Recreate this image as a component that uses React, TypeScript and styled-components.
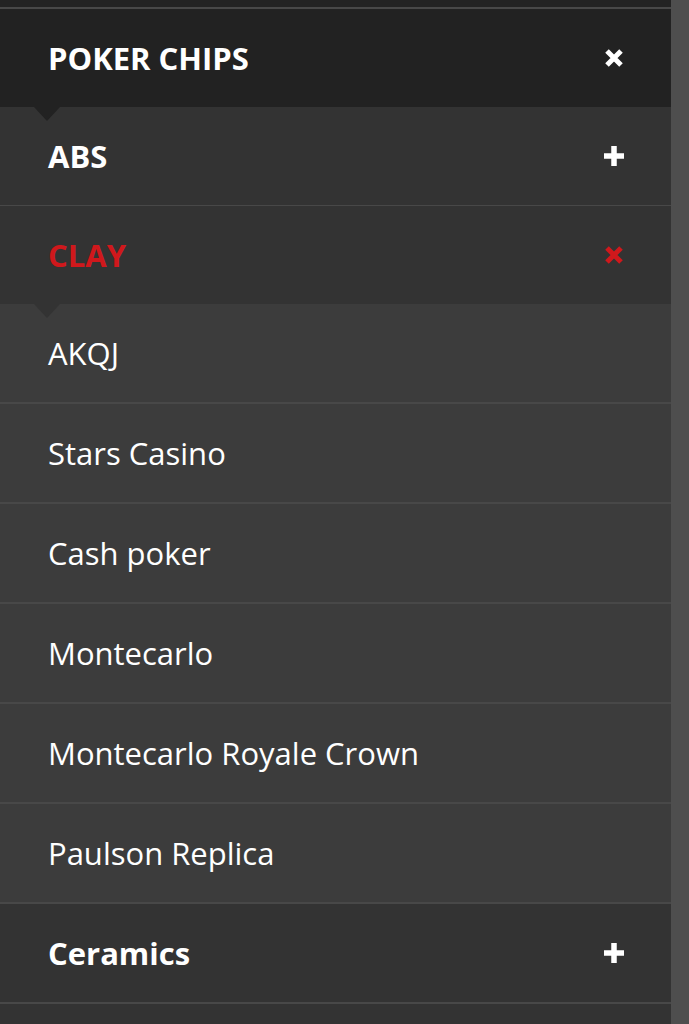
import React from "react";
import styled, { createGlobalStyle } from "styled-components";

const GlobalStyle = createGlobalStyle`
    html, body {
        margin: 0;
        padding: 0;
        background: #4b4b4b;
    }
    body {
        font-family: "Open Sans", "Noto Sans", sans-serif;
    }
`;

type Tone = "dark" | "mid" | "light";

const tones: Record<Tone, string> = {
    dark: "#222222",
    mid: "#333333",
    light: "#3c3c3c",
};

interface Item {
    label: string;
    tone: Tone;
    divider: number;
    bold?: boolean;
    icon?: "plus" | "close";
    active?: boolean;
    pointer?: boolean;
}

const items: Item[] = [
    { label: "POKER CHIPS", tone: "dark", divider: 2, bold: true, icon: "close", pointer: true },
    { label: "ABS", tone: "mid", divider: 0, bold: true, icon: "plus" },
    { label: "CLAY", tone: "mid", divider: 1, bold: true, icon: "close", active: true, pointer: true },
    { label: "AKQJ", tone: "light", divider: 0 },
    { label: "Stars Casino", tone: "light", divider: 2 },
    { label: "Cash poker", tone: "light", divider: 2 },
    { label: "Montecarlo", tone: "light", divider: 2 },
    { label: "Montecarlo Royale Crown", tone: "light", divider: 2 },
    { label: "Paulson Replica", tone: "light", divider: 2 },
    { label: "Ceramics", tone: "mid", divider: 2, bold: true, icon: "plus" },
];

const Icon: React.FC<{ kind: "plus" | "close"; color: string }> = ({ kind, color }) => (
    <svg width="22" height="22" viewBox="0 0 22 22">
        {kind === "plus" ? (
            <path d="M11 1v20M1 11h20" stroke={color} strokeWidth="5.5" />
        ) : (
            <path d="M4 4l14 14M18 4L4 18" stroke={color} strokeWidth="5" />
        )}
    </svg>
);

const App: React.FC = () => {
    return (
        <>
            <GlobalStyle />
            <Page>
                <Menu>
                    <TopStub />
                    {items.map((item) => (
                        <Row key={item.label} tone={item.tone} divider={item.divider}>
                            <Label bold={item.bold} active={item.active}>
                                {item.label}
                            </Label>
                            {item.icon && (
                                <IconBox>
                                    <Icon kind={item.icon} color={item.active ? "#d0181c" : "#ffffff"} />
                                </IconBox>
                            )}
                            {item.pointer && <Pointer tone={item.tone} />}
                        </Row>
                    ))}
                    <Row tone="mid" divider={2} />
                </Menu>
                <Scroll />
            </Page>
        </>
    );
};

const Page = styled.div`
    display: flex;
    width: 689px;
    height: 1024px;
    overflow: hidden;
`;

const Menu = styled.div`
    width: 671px;
    display: flex;
    flex-direction: column;
    background: #484848;
`;

const Scroll = styled.div`
    flex: 1;
    background: #4e4e4e;
`;

const TopStub = styled.div`
    height: 7px;
    background: #232323;
    flex-shrink: 0;
`;

const Row = styled.div<{ tone: Tone; divider: number }>`
    position: relative;
    flex-shrink: 0;
    height: 98px;
    margin-top: ${(p) => p.divider}px;
    display: flex;
    align-items: center;
    justify-content: space-between;
    padding: 0 48px;
    background: ${(p) => tones[p.tone]};
    box-sizing: border-box;
`;

const Label = styled.span<{ bold?: boolean; active?: boolean }>`
    font-size: 31px;
    font-weight: ${(p) => (p.bold ? 700 : 400)};
    color: ${(p) => (p.active ? "#d0181c" : "#ffffff")};
    line-height: 1;
`;

const IconBox = styled.span`
    display: flex;
    align-items: center;
    justify-content: center;
    width: 22px;
    height: 22px;
    margin-right: -2px;
`;

const Pointer = styled.span<{ tone: Tone }>`
    position: absolute;
    left: 34px;
    bottom: -14px;
    width: 0;
    height: 0;
    border-left: 13px solid transparent;
    border-right: 13px solid transparent;
    border-top: 14px solid ${(p) => tones[p.tone]};
    z-index: 2;
`;

export default App;
